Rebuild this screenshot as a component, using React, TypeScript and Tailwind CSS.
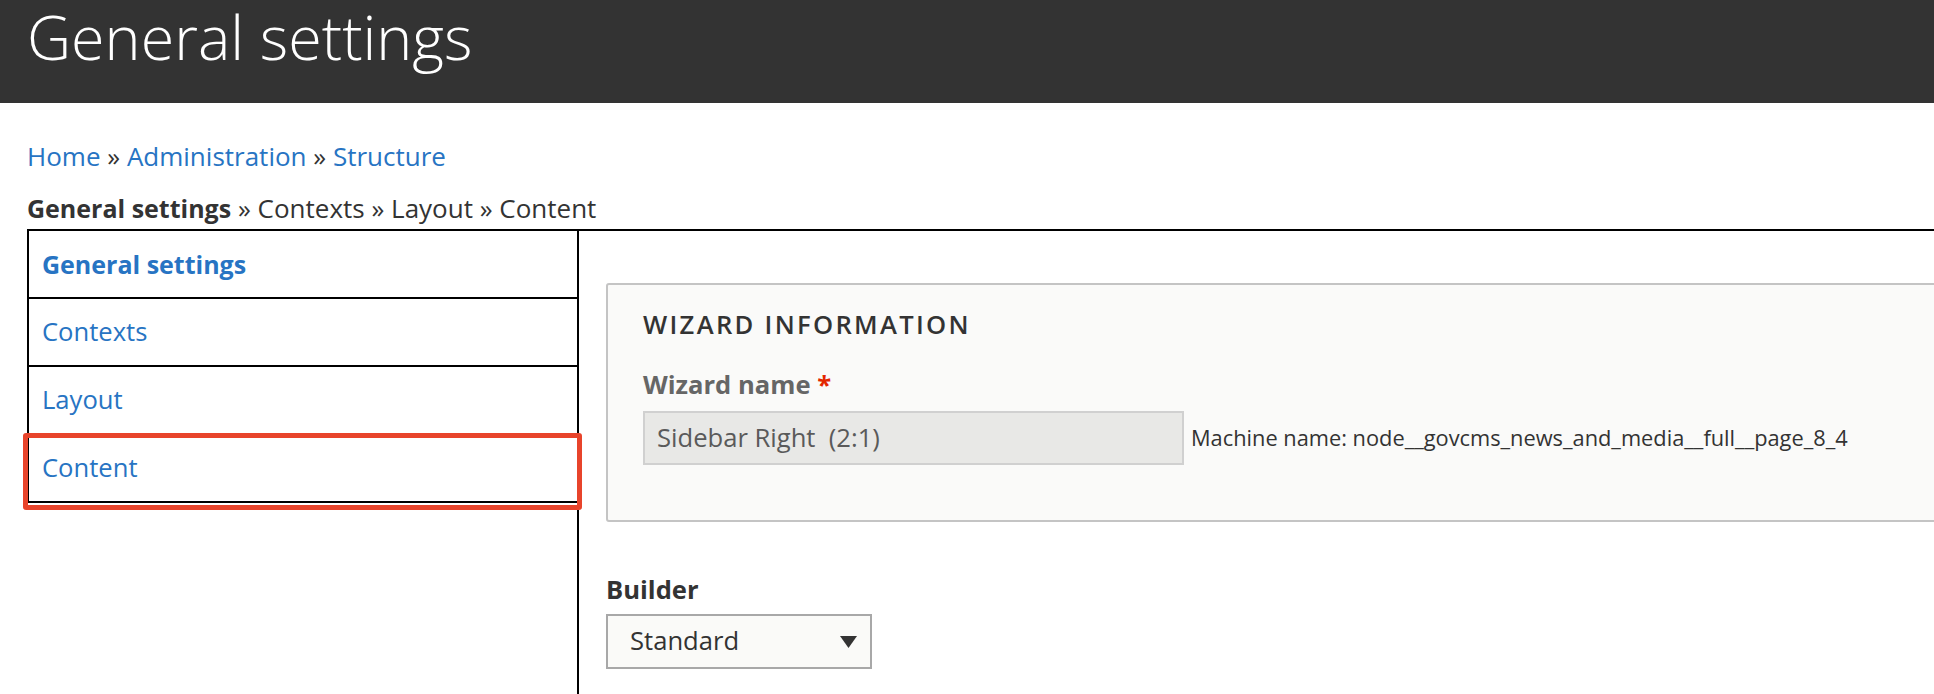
const navItems = [
  { label: 'General settings', bold: true },
  { label: 'Contexts', bold: false },
  { label: 'Layout', bold: false },
  { label: 'Content', bold: false },
];

const App = () => {
  return (
    <div className="min-h-[694px] overflow-hidden bg-white font-['Open_Sans',sans-serif] text-[#333]">
      <header className="h-[103px] bg-[#333] pl-[27px] pt-[1px]">
        <h1 className="text-[61px] font-light leading-[72px] text-white">General settings</h1>
      </header>

      <div className="pl-[27px] pt-[35px]">
        <nav className="h-[36px] text-[26px] leading-[36px] text-[#2774c3]">
          <a href="#">Home</a>
          <span className="text-[#333]"> » </span>
          <a href="#">Administration</a>
          <span className="text-[#333]"> » </span>
          <a href="#">Structure</a>
        </nav>
        <div className="mt-[16px] h-[36px] text-[26px] leading-[36px]">
          <span className="text-[25px] font-bold">General settings</span> » Contexts » Layout » Content
        </div>
      </div>

      <div className="mt-[3px] ml-[27px] flex border-t-2 border-black">
        {/* wizard steps */}
        <div className="w-[552px] shrink-0 border-r-2 border-black">
          <ul className="relative border-l-2 border-black">
            {navItems.map((item) => (
              <li key={item.label} className="h-[68px] border-b-2 border-black">
                <a
                  href="#"
                  className={`block px-[13px] leading-[66px] text-[#2774c3] ${item.bold ? 'text-[25px] font-bold' : 'text-[25.6px]'}`}
                >
                  {item.label}
                </a>
              </li>
            ))}
            <div className="pointer-events-none absolute top-[202px] left-[-6px] h-[77px] w-[559px] rounded-[3px] border-[5px] border-[#e8442b]" />
          </ul>
        </div>

        <div className="min-w-0 flex-1 pl-[27px] pt-[52px] pb-[40px]">
          <fieldset className="mr-[-40px] rounded-[3px] border-2 border-[#c4c4c4] bg-[#fafaf9] px-[35px] pt-[22px] pb-[55px]">
            <div className="text-[25.6px] font-semibold uppercase leading-[36px] tracking-[0.09em] text-[#333]">
              Wizard information
            </div>
            <label className="mt-[24px] block text-[25.6px] font-bold leading-[36px] text-[#666]">
              Wizard name <span className="text-[#e32700]">*</span>
            </label>
            <div className="mt-[8px] flex items-center">
              <div className="h-[54px] w-[541px] border-2 border-[#d0d0d0] bg-[#e8e8e6] px-[12px] text-[25.6px] leading-[50px] whitespace-pre text-[#5a5a5a]">
                Sidebar Right  (2:1)
              </div>
              <span className="ml-[7px] text-[21.8px] leading-[30px] text-[#333]">
                Machine name: node__govcms_news_and_media__full__page_8_4
              </span>
            </div>
          </fieldset>

          <label className="mt-[50px] block text-[25.6px] font-bold leading-[36px] text-[#333]">Builder</label>
          <div className="mt-[6px] flex h-[55px] w-[266px] items-center justify-between border-2 border-[#a8a8a8] bg-[#fafaf8] pr-[13px] pl-[22px] text-[25.6px] text-[#333]">
            <span>Standard</span>
            <svg width="17" height="12" viewBox="0 0 17 12">
              <path d="M0 0 H17 L8.5 12 Z" fill="#333" />
            </svg>
          </div>
        </div>
      </div>
    </div>
  );
};

export default App;
